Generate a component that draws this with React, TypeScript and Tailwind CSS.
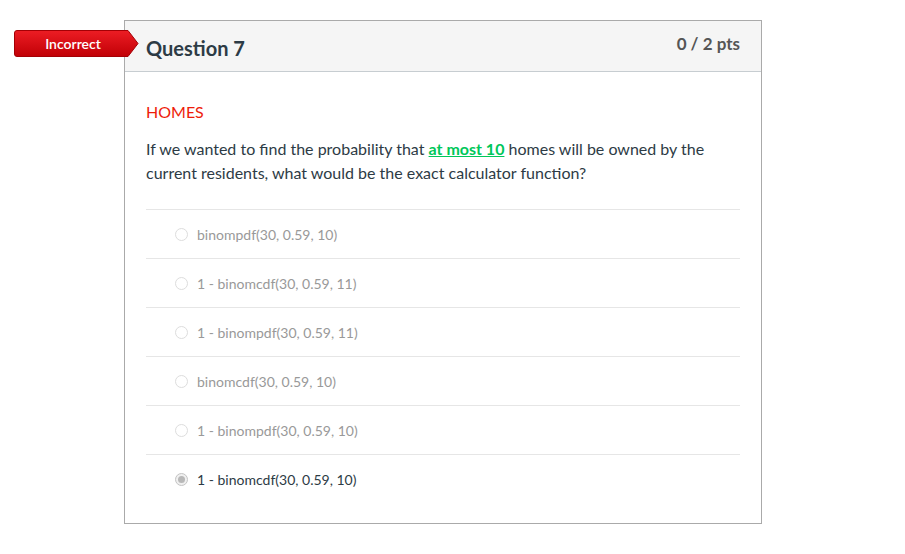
import React from "react";

interface Choice {
  label: string;
  selected?: boolean;
}

const choices: Choice[] = [
  { label: "binompdf(30, 0.59, 10)" },
  { label: "1 - binomcdf(30, 0.59, 11)" },
  { label: "1 - binompdf(30, 0.59, 11)" },
  { label: "binomcdf(30, 0.59, 10)" },
  { label: "1 - binompdf(30, 0.59, 10)" },
  { label: "1 - binomcdf(30, 0.59, 10)", selected: true },
];

const IncorrectBadge = () => (
  <div className="absolute left-[14px] top-[30px] h-[27px] w-[125px]">
    <svg width="125" height="27" viewBox="0 0 125 27" className="absolute inset-0">
      <defs>
        <linearGradient id="red" x1="0" y1="0" x2="0" y2="1">
          <stop offset="0" stopColor="#ec1d24" />
          <stop offset="1" stopColor="#c10006" />
        </linearGradient>
      </defs>
      <path
        d="M3 0.5 H114 L124 13.5 L114 26.5 H3 Q0.5 26.5 0.5 24 V3 Q0.5 0.5 3 0.5 Z"
        fill="url(#red)"
        stroke="#a40005"
        strokeWidth="1"
      />
    </svg>
    <div className="relative flex h-full w-[118px] items-center justify-center text-[14px] font-semibold text-white">
      Incorrect
    </div>
  </div>
);

export default function App() {
  return (
    <div className="relative min-h-[554px] w-[905px] bg-white font-['Lato','Noto_Sans',sans-serif]">
      <div className="ml-[124px] pt-[20px]">
        <div className="w-[638px] border border-[#aaaaaa]">
          <div className="flex h-[51px] items-center justify-between border-b border-[#c7cdd1] bg-[#f5f5f5] pl-[21px] pr-[21px]">
            <h2 className="mt-[3px] text-[20px] font-bold text-[#2d3b45]">Question 7</h2>
            <div className="mb-[5px] text-[17px] font-bold text-[#555555]">0 / 2 pts</div>
          </div>
          <div className="px-[21px] pb-[20px] pt-[28px]">
            <div className="text-[16px] leading-[24px] text-[#ee1c0a]">HOMES</div>
            <p className="mt-[13px] text-[16px] leading-[24px] text-[#2d3b45]">
              If we wanted to find the probability that{" "}
              <span className="font-bold text-[#00c75a] underline">at most 10</span> homes
              will be owned by the current residents, what would be the exact calculator
              function?
            </p>
            <div className="mt-[24px]">
              {choices.map((c, i) => (
                <div
                  key={i}
                  className="flex h-[49px] items-center border-t border-[#e6e6e6] pl-[29px] pt-[1px]"
                >
                  <span
                    className={`flex h-[13px] w-[13px] items-center justify-center rounded-full border ${
                      c.selected ? "border-[#c4c4c4] bg-[#f0f0f0]" : "border-[#dddddd] bg-white"
                    }`}
                  >
                    {c.selected && <span className="h-[7px] w-[7px] rounded-full bg-[#b8b8b8]" />}
                  </span>
                  <span
                    className={`ml-[9px] text-[14px] ${
                      c.selected ? "text-[#2d3b45]" : "text-[#999999]"
                    }`}
                  >
                    {c.label}
                  </span>
                </div>
              ))}
            </div>
          </div>
        </div>
      </div>
      <IncorrectBadge />
    </div>
  );
}
